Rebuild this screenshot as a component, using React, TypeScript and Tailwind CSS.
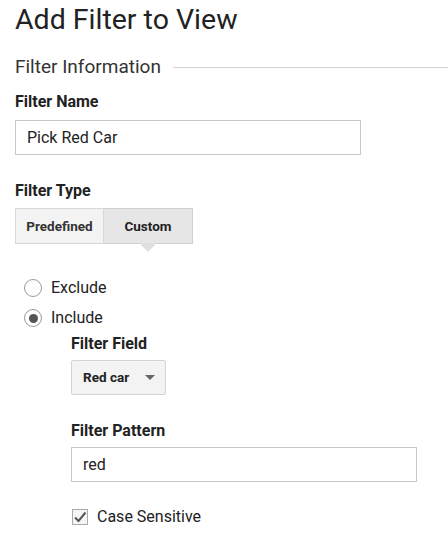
import React from "react";

const font = { fontFamily: "Roboto, 'Liberation Sans', sans-serif" };

const Radio: React.FC<{ checked?: boolean; label: string }> = ({ checked, label }) => (
  <div className="flex items-center h-[30px]">
    <span className="w-[18px] h-[18px] rounded-full border border-[#9a9a9a] bg-white flex items-center justify-center ml-[24px]">
      {checked && <span className="w-[9px] h-[9px] rounded-full bg-[#555]" />}
    </span>
    <span className="ml-[9px] text-[16px] text-[#222]">{label}</span>
  </div>
);

export default function App() {
  return (
    <div className="w-[448px] h-[547px] bg-white overflow-hidden pl-[15px]" style={font}>
      {/* Heading */}
      <h1 className="text-[28.5px] leading-[32px] text-[#222] pt-[4px]">Add Filter to View</h1>

      {/* Section title with rule */}
      <div className="flex items-center mt-[20px]">
        <span className="text-[19px] leading-[22px] text-[#333]">Filter Information</span>
        <div className="flex-1 border-t border-[#d4d4d4] ml-[12px]" />
      </div>

      <div className="mt-[15px] text-[16px] font-bold text-[#222] leading-[18px]">Filter Name</div>
      <div className="mt-[9px] w-[346px] h-[35px] border border-[#c8c8c8] flex items-center px-[11px] text-[16px] text-[#222]">
        Pick Red Car
      </div>

      <div className="mt-[27px] text-[16px] font-bold text-[#222] leading-[18px]">Filter Type</div>
      <div className="mt-[8px] flex">
        <div className="w-[89px] h-[36px] border border-[#d8d8d8] bg-[#f3f3f3] flex items-center justify-center text-[13.5px] font-bold text-[#333]">
          Predefined
        </div>
        <div className="relative w-[89px] h-[36px] border border-l-0 border-[#d0d0d0] bg-[#e6e6e6] flex items-center justify-center text-[13.5px] font-bold text-[#222]">
          Custom
          <span className="absolute left-1/2 -translate-x-1/2 top-full w-0 h-0 border-l-[9px] border-r-[9px] border-t-[9px] border-l-transparent border-r-transparent border-t-[#e0e0e0]" />
        </div>
      </div>

      {/* Radios */}
      <div className="mt-[29px] -ml-[15px]">
        <Radio label="Exclude" />
        <Radio checked label="Include" />
      </div>

      <div className="pl-[56px]">
        <div className="text-[16px] font-bold text-[#222] leading-[18px] mt-[2px]">Filter Field</div>
        <div className="mt-[7px] w-[95px] h-[35px] border border-[#d4d4d4] rounded-[2px] bg-[#f3f3f3] flex items-center pl-[11px] pr-[10px] justify-between text-[13.5px] font-bold text-[#222]">
          <span>Red car</span>
          <span className="w-0 h-0 border-l-[5px] border-r-[5px] border-t-[5px] border-l-transparent border-r-transparent border-t-[#666]" />
        </div>

        <div className="mt-[27px] text-[16px] font-bold text-[#222] leading-[18px]">Filter Pattern</div>
        <div className="mt-[7px] w-[346px] h-[35px] border border-[#c8c8c8] flex items-center px-[11px] text-[16px] text-[#222]">
          red
        </div>

        <div className="mt-[23px] flex items-center">
          <span className="w-[16px] h-[16px] border border-[#aaa] bg-[#f5f5f5] flex items-center justify-center ml-[1px]">
            <svg width="14" height="14" viewBox="0 0 14 14">
              <path d="M2 7.5 L5.5 11 L12.5 2.5" fill="none" stroke="#555" strokeWidth="2" />
            </svg>
          </span>
          <span className="ml-[9px] text-[16px] text-[#222]">Case Sensitive</span>
        </div>
      </div>
    </div>
  );
}
